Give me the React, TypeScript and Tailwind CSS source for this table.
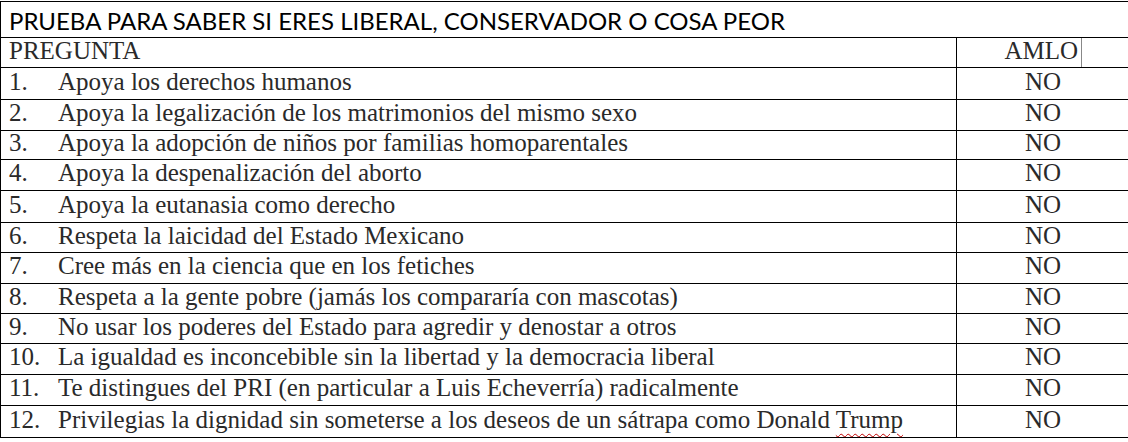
import React from "react";

const rows = [
  { n: "1.", text: "Apoya los derechos humanos", h: "h-[32px]" },
  { n: "2.", text: "Apoya la legalización de los matrimonios del mismo sexo", h: "h-[31px]" },
  { n: "3.", text: "Apoya la adopción de niños por familias homoparentales", h: "h-[29px]" },
  { n: "4.", text: "Apoya la despenalización del aborto", h: "h-[31px]" },
  { n: "5.", text: "Apoya la eutanasia como derecho", h: "h-[32px]" },
  { n: "6.", text: "Respeta la laicidad del Estado Mexicano", h: "h-[30px]" },
  { n: "7.", text: "Cree más en la ciencia que en los fetiches", h: "h-[31px]" },
  { n: "8.", text: "Respeta a la gente pobre (jamás los compararía con mascotas)", h: "h-[30px]" },
  { n: "9.", text: "No usar los poderes del Estado para agredir y denostar a otros", h: "h-[30px]" },
  { n: "10.", text: "La igualdad es inconcebible sin la libertad y la democracia liberal", h: "h-[31px]" },
  { n: "11.", text: "Te distingues del PRI (en particular a Luis Echeverría) radicalmente", h: "h-[31px]" },
];

const App: React.FC = () => {
  return (
    <div className="w-[1128px] h-[442px] bg-white overflow-hidden">
      <div className="w-[1130px] mt-px border border-black text-[#2a2a2a]">
        {/* Title */}
        <div className="h-[36px] flex items-center pl-[8px] pt-[2px] border-b border-black font-['Lato'] text-[24px] text-black leading-none">
          PRUEBA PARA SABER SI ERES LIBERAL, CONSERVADOR O COSA PEOR
        </div>

        {/* Header */}
        <div className="h-[30px] flex border-b border-black font-['Times_New_Roman'] text-[25px] leading-none">
          <div className="w-[956px] flex items-center pl-[8px] pb-[5px] border-r border-black">PREGUNTA</div>
          <div className="flex-1 flex items-center">
            <span className="flex-1 text-right pr-[3px] pb-[5px]">AMLO</span>
            <span className="w-[1px] h-full bg-[#888]" />
            <span className="w-[47px]" />
          </div>
        </div>

        {/* Questions */}
        {rows.map((r) => (
          <div key={r.n} className={`${r.h} flex border-b border-black font-['Times_New_Roman'] text-[25px] leading-none`}>
            <div className="w-[956px] flex items-center pl-[8px] pb-[5px] border-r border-black">
              <span className="w-[49px]">{r.n}</span>
              <span>{r.text}</span>
            </div>
            <div className="flex-1 flex items-center justify-center pb-[5px]">NO</div>
          </div>
        ))}
        <div className="h-[31px] flex font-['Times_New_Roman'] text-[25px] leading-none">
          <div className="w-[956px] flex items-center pl-[8px] pb-[5px] border-r border-black">
            <span className="w-[49px]">12.</span>
            <span>
              Privilegias la dignidad sin someterse a los deseos de un sátrapa como Donald{" "}
              <span className="underline decoration-wavy decoration-[#c00000] decoration-1 underline-offset-[5px]">
                Trump
              </span>
            </span>
          </div>
          <div className="flex-1 flex items-center justify-center pb-[5px]">NO</div>
        </div>
      </div>
    </div>
  );
};

export default App;
